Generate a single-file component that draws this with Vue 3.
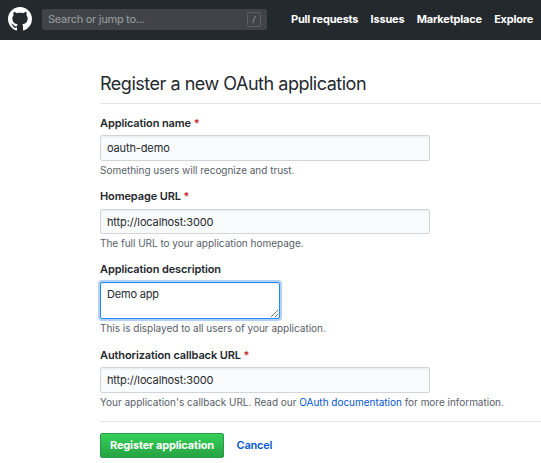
<script setup>
import { ref } from 'vue'

const links = ['Pull requests', 'Issues', 'Marketplace', 'Explore']
const name = ref('oauth-demo')
const homepage = ref('http://localhost:3000')
const description = ref('Demo app')
const callback = ref('http://localhost:3000')
</script>

<template>
  <div class="page">
    <header class="header">
      <svg class="logo" viewBox="0 0 16 16" width="24" height="24">
        <path fill="#fff" fill-rule="evenodd" d="M8 0C3.58 0 0 3.58 0 8c0 3.54 2.29 6.53 5.47 7.59.4.07.55-.17.55-.38 0-.19-.01-.82-.01-1.49-2.01.37-2.53-.49-2.69-.94-.09-.23-.48-.94-.82-1.13-.28-.15-.68-.52-.01-.53.63-.01 1.08.58 1.23.82.72 1.21 1.87.87 2.33.66.07-.52.28-.87.51-1.07-1.78-.2-3.64-.89-3.64-3.95 0-.87.31-1.59.82-2.15-.08-.2-.36-1.02.08-2.12 0 0 .67-.21 2.2.82.64-.18 1.32-.27 2-.27s1.36.09 2 .27c1.53-1.04 2.2-.82 2.2-.82.44 1.1.16 1.92.08 2.12.51.56.82 1.27.82 2.15 0 3.07-1.87 3.75-3.65 3.95.29.25.54.73.54 1.48 0 1.07-.01 1.93-.01 2.2 0 .21.15.46.55.38A8.01 8.01 0 0 0 16 8c0-4.42-3.58-8-8-8z" />
      </svg>
      <div class="search">
        <span class="placeholder">Search or jump to...</span>
        <svg class="slash" width="14" height="15" viewBox="0 0 14 15" fill="none">
          <rect x="0.5" y="0.5" width="13" height="14" rx="2" stroke="#5d6165" />
          <path d="M5.5 11 8.4 4" stroke="#85898c" />
        </svg>
      </div>
      <nav class="nav">
        <a v-for="text in links" :key="text">{{ text }}</a>
      </nav>
    </header>

    <main class="main">
      <h1 class="title">Register a new OAuth application</h1>

      <div class="field">
        <label>Application name <b>*</b></label>
        <input v-model="name" spellcheck="false" />
        <p>Something users will recognize and trust.</p>
      </div>
      <div class="field">
        <label>Homepage URL <b>*</b></label>
        <input v-model="homepage" class="short" spellcheck="false" />
        <p>The full URL to your application homepage.</p>
      </div>
      <div class="field tall">
        <label>Application description</label>
        <div class="area">
          <span>{{ description }}</span>
          <svg class="grip" width="9" height="9" viewBox="0 0 9 9" fill="none" stroke="#666" stroke-width="0.9">
            <path d="M1 8 8 1M5 8 8 5" />
          </svg>
        </div>
        <p>This is displayed to all users of your application.</p>
      </div>
      <div class="field last">
        <label>Authorization callback URL <b>*</b></label>
        <input v-model="callback" class="raised" spellcheck="false" />
        <p>Your application's callback URL. Read our <a>OAuth documentation</a> for more information.</p>
      </div>

      <div class="actions">
        <button class="register">Register application</button>
        <a class="cancel">Cancel</a>
      </div>
    </main>
  </div>
</template>

<style>
body {
  margin: 0;
  background: #fff;
}
</style>

<style scoped>
* {
  box-sizing: border-box;
}
.page {
  width: 541px;
  height: 463px;
  overflow: hidden;
  font-family: Inter, "Liberation Sans", sans-serif;
  font-size: 11px;
  color: #24292e;
  white-space: nowrap;
}
.header {
  height: 40px;
  background: #24292e;
  display: flex;
  align-items: center;
  padding-left: 8px;
}
.logo {
  flex: none;
  margin-top: -2px;
}
.search {
  width: 225px;
  height: 21px;
  margin: -1px 0 0 10px;
  padding: 0 6px;
  border-radius: 2px;
  background: #404448;
  display: flex;
  align-items: center;
  justify-content: space-between;
  flex: none;
}
.placeholder {
  padding-bottom: 1px;
  color: #909396;
  font-weight: 500;
  letter-spacing: -0.3px;
}
.nav {
  display: flex;
  margin: -2px 0 0 24px;
  gap: 12.3px;
}
.nav a {
  color: #fff;
  font-weight: 700;
  letter-spacing: -0.2px;
}
.main {
  padding-left: 100px;
}
.title {
  margin: 0;
  height: 64px;
  padding-top: 32px;
  border-bottom: 1px solid #e1e4e8;
  font-weight: 400;
  font-size: 18px;
  line-height: 24px;
  letter-spacing: -0.48px;
}
.field {
  height: 73px;
  padding-top: 11px;
  display: flex;
  flex-direction: column;
  align-items: flex-start;
}
.field > * {
  flex-shrink: 0;
}
.tall {
  height: 86px;
}
.last {
  height: 85px;
}
label {
  height: 20px;
  line-height: 16px;
  font-weight: 600;
  letter-spacing: -0.11px;
}
label b {
  color: #cb2431;
  font-weight: 600;
}
input {
  width: 330px;
  height: 26px;
  margin: 0;
  padding: 0 6px;
  border: 1px solid #d1d5da;
  border-radius: 2px;
  outline: none;
  background: #fafbfc;
  box-shadow: inset 0 1px 2px rgba(27, 31, 35, 0.075);
  font: 400 11px/16px Inter, sans-serif;
  letter-spacing: -0.13px;
  color: #24292e;
}
.short {
  height: 25px;
  margin-top: 1px;
}
.raised {
  padding-bottom: 1px;
}
p {
  margin: 1px 0 0;
  font-size: 10px;
  line-height: 17px;
  letter-spacing: -0.015px;
  color: #586069;
}
p a {
  color: #0558cf;
}
.area {
  position: relative;
  width: 180px;
  height: 37px;
  margin-top: 1px;
  padding: 3px 6px;
  border: 1px solid #2188ff;
  border-radius: 2px;
  box-shadow: inset 0 1px 2px rgba(27, 31, 35, 0.075), 0 0 0 2px rgba(3, 102, 214, 0.3);
  line-height: 16px;
  letter-spacing: -0.2px;
}
.grip {
  position: absolute;
  right: 0;
  bottom: 0;
}
.actions {
  width: 441px;
  padding-top: 11px;
  border-top: 1px solid #e1e4e8;
  display: flex;
  align-items: center;
  gap: 12.5px;
}
.register {
  width: 124px;
  height: 25px;
  padding: 0 0 1px;
  border: 1px solid #28984a;
  border-radius: 2px;
  background: linear-gradient(#34d058, #28a745 90%);
  color: #fff;
  font: 700 11px/16px Inter, sans-serif;
  letter-spacing: -0.15px;
}
.cancel {
  padding-bottom: 1px;
  color: #0558cf;
  font-weight: 600;
  letter-spacing: -0.2px;
}
</style>
